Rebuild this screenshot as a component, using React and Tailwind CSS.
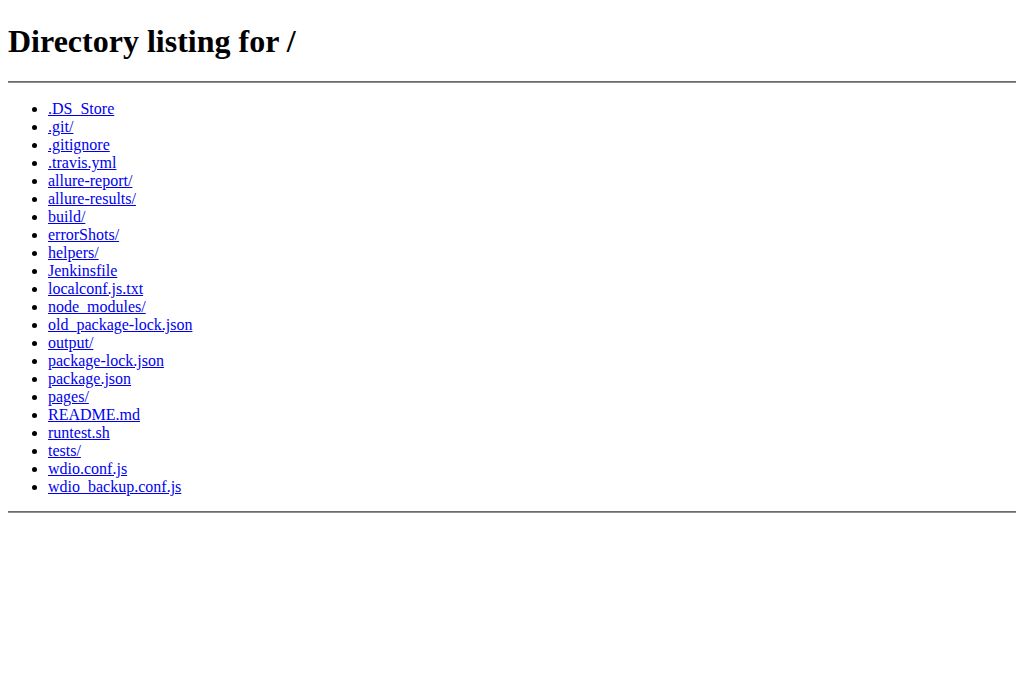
import React from "react";

const items = [
  ".DS_Store",
  ".git/",
  ".gitignore",
  ".travis.yml",
  "allure-report/",
  "allure-results/",
  "build/",
  "errorShots/",
  "helpers/",
  "Jenkinsfile",
  "localconf.js.txt",
  "node_modules/",
  "old_package-lock.json",
  "output/",
  "package-lock.json",
  "package.json",
  "pages/",
  "README.md",
  "runtest.sh",
  "tests/",
  "wdio.conf.js",
  "wdio_backup.conf.js",
];

export default function App() {
  return (
    <div className="min-h-[693px] bg-white px-2 pt-[23px] font-['Liberation_Serif',serif] text-base text-black">
      <h1 className="mb-[21px] text-[32px] font-bold leading-[37px]">Directory listing for /</h1>
      <hr className="h-0 border-0 border-t border-b border-t-[#6a6a6a] border-b-[#8f8f8f]" />
      <ul className="mt-[17px] mb-[15px] list-disc pl-10">
        {items.map((name) => (
          <li key={name} className="leading-[18px]">
            <a href="#" className="text-[#0000EE] underline">{name}</a>
          </li>
        ))}
      </ul>
      <hr className="h-0 border-0 border-t border-b border-t-[#6a6a6a] border-b-[#8f8f8f]" />
    </div>
  );
}
